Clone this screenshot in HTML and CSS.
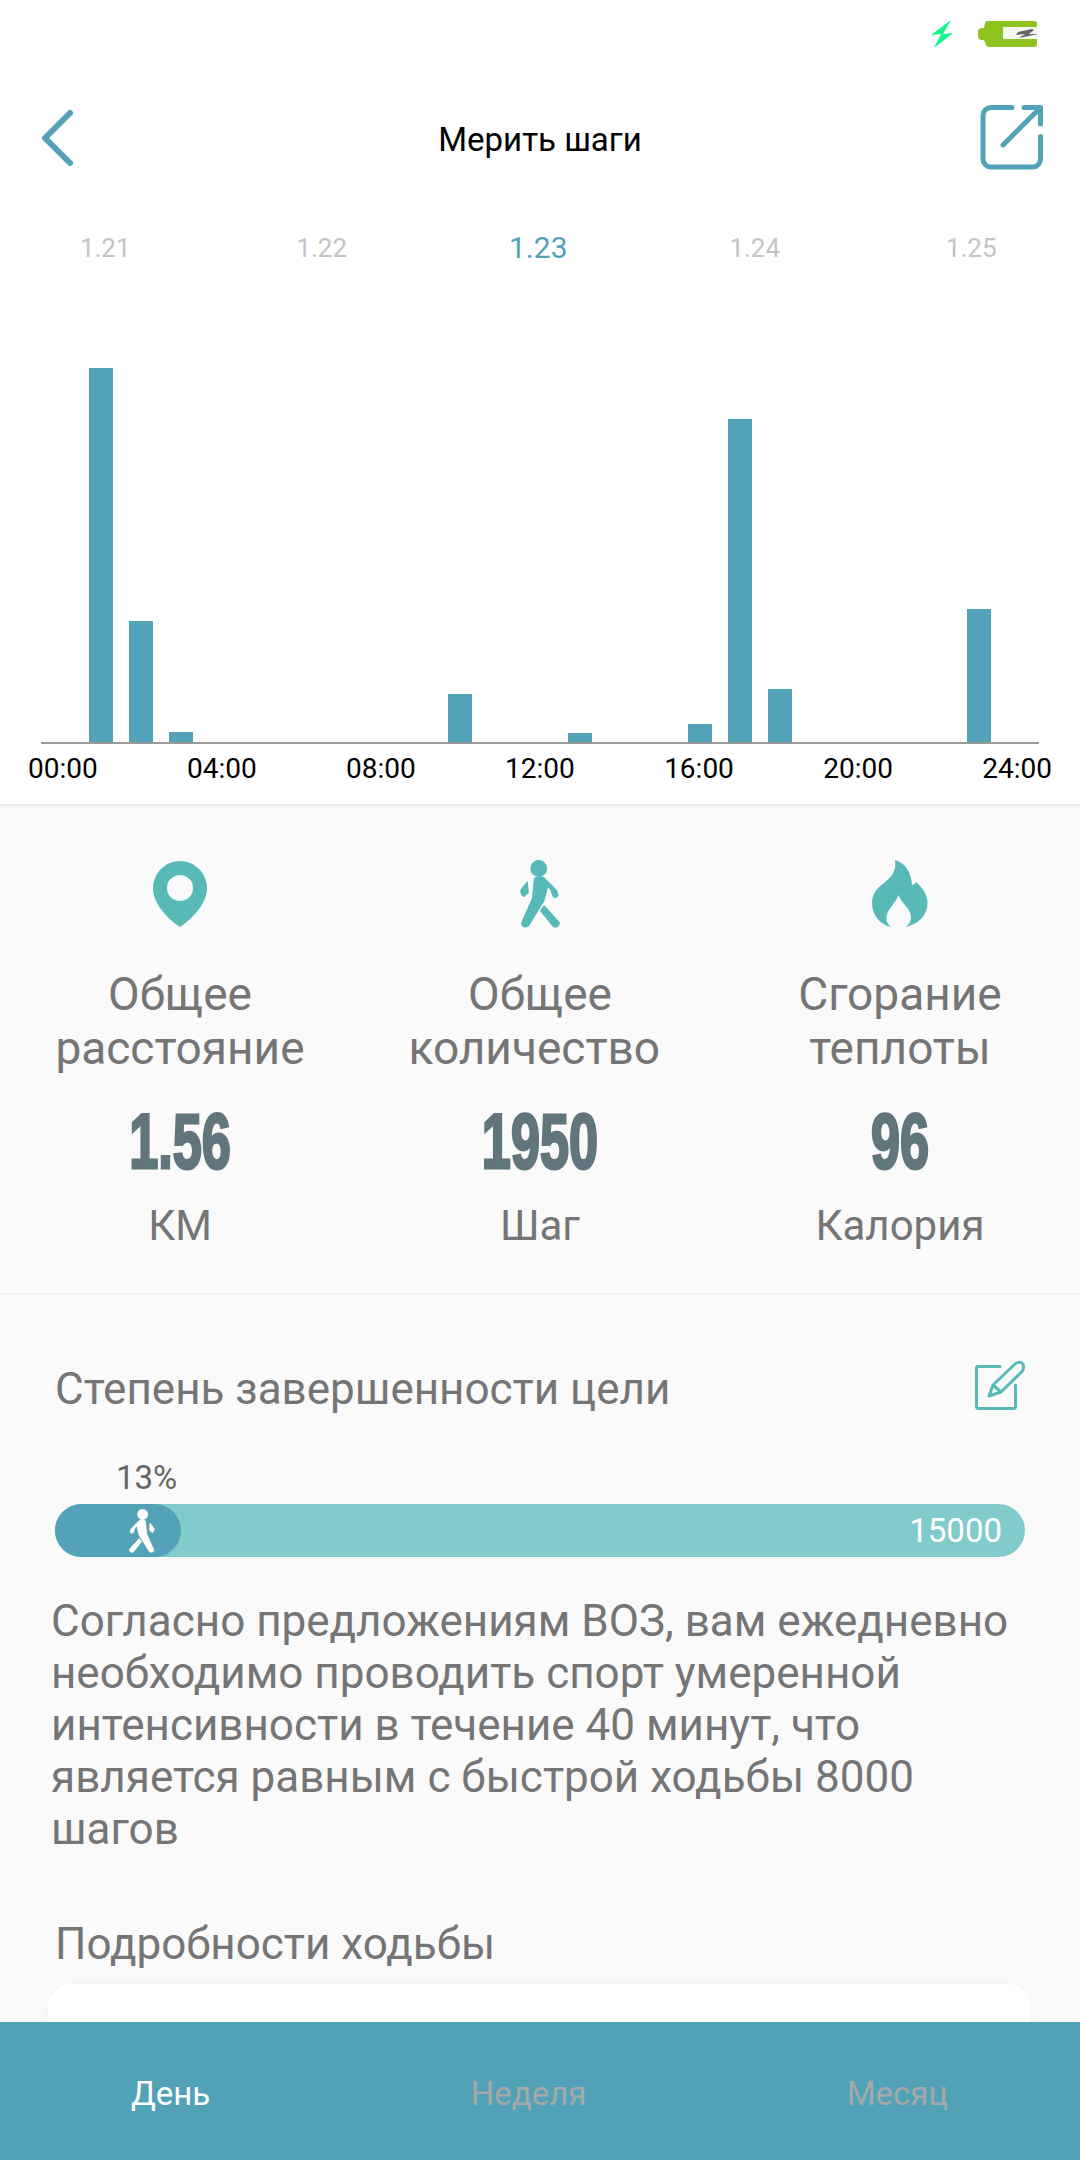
FILE: index.html
```html
<!DOCTYPE html>
<html lang="en">
  <head>
    <meta charset="UTF-8" />
    <title>Мерить шаги</title>
    <link rel="stylesheet" href="styles.css">
  </head>
  <body>
    <div class="app">
      <div class="chart-panel">
        <div class="status-bar">
          <svg viewBox="0 0 22 28" width="22" height="28"><path d="M20 0 0 15l10-1L3 28l19-15-10 1z" fill="#14f58a"/></svg>
          <svg viewBox="0 0 60 26" width="60" height="26">
            <path d="M9 0h47a3 3 0 0 1 3 3v3H25v12h34v5a3 3 0 0 1-3 3H11a3 3 0 0 1-3-2l-2-5H4a4 4 0 0 1-4-4V11a4 4 0 0 1 4-4h2l1-5a3 3 0 0 1 2-2z" fill="#8fc31f"/>
            <rect x="25" y="6" width="35" height="12" fill="#f5f5f1"/>
            <path d="M54 8 40 11l-2 3 9-1-6 4 19-4-9 0 5-4z" fill="#666"/>
          </svg>
        </div>
        <header class="top-bar">
          <svg viewBox="0 0 40 60" width="40" height="60"><path d="M33 5 8 30l25 25" fill="none" stroke="#53a2b7" stroke-width="6" stroke-linecap="round" stroke-linejoin="round"/></svg>
          <h1>Мерить шаги</h1>
          <svg class="share" viewBox="0 0 68 70" width="68" height="70" fill="none" stroke="#53a2b7" stroke-width="5" stroke-linecap="round" stroke-linejoin="round">
            <path d="M34 4.5H13a8 8 0 0 0-8 8V56a8 8 0 0 0 8 8h41.5a8 8 0 0 0 8-8V33.5"/>
            <path d="M46 4.5h16.5V21M62 5 25 42"/>
          </svg>
        </header>
        <div class="dates">
          <span>1.21</span>
          <span>1.22</span>
          <span class="current">1.23</span>
          <span>1.24</span>
          <span>1.25</span>
        </div>
        <!-- one slot per hour mark, 00 to 24 -->
        <div class="chart">
          <div class="slot"></div>
          <div class="slot"><i class="bar" style="height:374px"></i></div>
          <div class="slot"><i class="bar" style="height:121px"></i></div>
          <div class="slot"><i class="bar" style="height:10px"></i></div>
          <div class="slot"></div>
          <div class="slot"></div>
          <div class="slot"></div>
          <div class="slot"></div>
          <div class="slot"></div>
          <div class="slot"></div>
          <div class="slot"><i class="bar" style="height:48px"></i></div>
          <div class="slot"></div>
          <div class="slot"></div>
          <div class="slot"><i class="bar" style="height:9px"></i></div>
          <div class="slot"></div>
          <div class="slot"></div>
          <div class="slot"><i class="bar" style="height:18px"></i></div>
          <div class="slot"><i class="bar" style="height:323px"></i></div>
          <div class="slot"><i class="bar" style="height:53px"></i></div>
          <div class="slot"></div>
          <div class="slot"></div>
          <div class="slot"></div>
          <div class="slot"></div>
          <div class="slot"><i class="bar" style="height:133px"></i></div>
          <div class="slot"></div>
        </div>
        <div class="hours">
          <span>00:00</span>
          <span>04:00</span>
          <span>08:00</span>
          <span>12:00</span>
          <span>16:00</span>
          <span>20:00</span>
          <span>24:00</span>
        </div>
      </div>

      <section class="totals">
        <div class="total">
          <svg viewBox="0 0 56 68" width="56" height="68"><path fill-rule="evenodd" d="M28 1A27 27 0 0 0 1 28c0 16 15 31 27 39 12-8 27-23 27-39A27 27 0 0 0 28 1zm0 14a13 13 0 1 1 0 26 13 13 0 0 1 0-26z" fill="#57bab7"/></svg>
          <p class="label">Общее<br>расстояние</p>
          <p class="value">1.56</p>
          <p class="unit">КМ</p>
        </div>
        <div class="total">
          <svg viewBox="0 0 40 67" width="41" height="68" fill="#57bab7" stroke="#57bab7" stroke-linejoin="round">
            <circle cx="18.3" cy="8.3" r="7.8"/>
            <path d="M14 18C17 16 21 16 24 18L34 28C35.5 29 36 30 36.5 32L37 34C37.5 37 33 38 32 35L30 29 27 26 23.5 40 10 62C8 68 0 67 1.7 61L12 38Z"/>
            <path d="M23.5 45 20 50 32 65C35 68 40 64 38 61Z"/>
            <path d="M7 21.5 1 29C0 31 1 35 3.5 36L8 32Z"/>
          </svg>
          <p class="label">Общее<br>количество&nbsp;</p>
          <p class="value">1950</p>
          <p class="unit">Шаг</p>
        </div>
        <div class="total">
          <svg viewBox="0 0 56 68" width="56" height="68"><path d="M23 0C33 3 39 11 40 25C41 25 43 24 44 22C51 28 55.5 35 55.5 43C55.5 55 47 64 33.5 67C38 64 40 59 38.5 54C36.5 47 30 44 26.5 35C24 42 18 47 15 54C13.5 60 15 64 19.5 67C8 65 0 55 0 43C0 34 5 28 12 23C18 18 25 12 23 0Z" fill="#57bab7"/></svg>
          <p class="label">Сгорание<br>теплоты</p>
          <p class="value">96</p>
          <p class="unit">Калория</p>
        </div>
      </section>

      <section class="goal">
        <div class="goal-head">
          <h2>Степень завершенности цели</h2>
          <svg viewBox="0 0 50 50" width="50" height="50" fill="none" stroke="#57bab7" stroke-width="3" stroke-linecap="round" stroke-linejoin="round">
            <path d="M25 6.5H3a1.5 1.5 0 0 0-1.5 1.5v39a1.5 1.5 0 0 0 1.5 1.5h36a1.5 1.5 0 0 0 1.5-1.5V25"/>
            <path d="M14 36 18 25 40 4C44 1 48 2 48.5 6C49 9 47.5 11 46.5 12L26 32ZM18 25 26 32"/>
          </svg>
        </div>
        <div class="percent">13%</div>
        <div class="progress">
          <div class="progress-fill">
            <svg class="flip" viewBox="0 0 40 67" width="27" height="44" fill="#fff" stroke="#fff" stroke-linejoin="round">
              <circle cx="18.3" cy="8.3" r="7.8"/>
              <path d="M14 18C17 16 21 16 24 18L34 28C35.5 29 36 30 36.5 32L37 34C37.5 37 33 38 32 35L30 29 27 26 23.5 40 10 62C8 68 0 67 1.7 61L12 38Z"/>
              <path d="M23.5 45 20 50 32 65C35 68 40 64 38 61Z"/>
              <path d="M7 21.5 1 29C0 31 1 35 3.5 36L8 32Z"/>
            </svg>
          </div>
          <span class="goal-steps">15000</span>
        </div>
        <p class="advice">Согласно предложениям ВОЗ, вам ежедневно необходимо проводить спорт умеренной интенсивности в течение 40 минут, что является равным с быстрой ходьбы 8000 шагов</p>
        <h2 class="details-title">Подробности ходьбы</h2>
        <div class="details-card"></div>
      </section>

      <nav class="tabs">
        <span class="active">День</span>
        <span>Неделя</span>
        <span>Месяц</span>
      </nav>
    </div>
  </body>
</html>
```

FILE: styles.css
```css
body,
html {
  margin: 0;
  height: 100%;
  font-family: Roboto, "Liberation Sans", sans-serif;
}

p,
h1,
h2 {
  margin: 0;
  font-weight: normal;
}

.app {
  position: relative;
  height: 2160px;
  overflow: hidden;
  background-color: #fafafa;
}

.chart-panel {
  height: 804px;
  background-color: #fff;
  box-shadow: 0 1px 4px rgba(0, 0, 0, 0.1);
}

.status-bar {
  display: flex;
  justify-content: flex-end;
  align-items: center;
  gap: 25px;
  height: 68px;
  padding-right: 42px;
}

.top-bar {
  display: grid;
  grid-template-columns: 1fr auto 1fr;
  align-items: center;
  height: 70px;
  margin-top: 35px;
  padding: 0 34px 0 37px;
}

.top-bar h1 {
  margin: 2px 0 0 -3px;
  font-size: 33px;
  color: #000;
}

.top-bar .share {
  justify-self: end;
}

.dates {
  display: flex;
  margin-left: -3px;
  padding-top: 57px;
  color: #c4c4c4;
  font-size: 26px;
  line-height: 36px;
}

.dates span {
  flex: 0 0 216.5px;
  text-align: center;
}

.dates .current {
  color: #53a2b7;
  font-size: 30px;
}

.chart {
  display: grid;
  grid-template-columns: repeat(25, 1fr);
  align-items: end;
  height: 476px;
  margin: 0 41px;
  border-bottom: 2px solid #999;
}

.slot {
  display: flex;
  justify-content: center;
}

.bar {
  display: block;
  width: 24px;
  background-color: #53a2b7;
}

.hours {
  display: flex;
  justify-content: space-between;
  padding: 9px 28px 0 28px;
  font-size: 28px;
  line-height: 32px;
  color: #000;
}

.totals {
  display: flex;
  box-sizing: border-box;
  height: 490px;
  padding-top: 56px;
  border-bottom: 1px solid #ececec;
}

.total {
  flex: 1;
  text-align: center;
}

.total svg {
  display: block;
  margin: 0 auto;
}

.label {
  margin-top: 39px;
  font-size: 46px;
  line-height: 54px;
  color: #757575;
}

/* no condensed face installed, so the digits are squeezed and thickened */
.value {
  margin-top: 25px;
  font-family: "Liberation Sans", sans-serif;
  font-weight: bold;
  font-size: 78px;
  line-height: 82px;
  color: #61767c;
  -webkit-text-stroke: 3px #61767c;
  transform: scaleX(0.67);
}

.unit {
  margin-top: 19px;
  font-size: 42px;
  line-height: 50px;
  color: #757575;
}

.goal {
  padding: 0 55px;
}

.goal-head {
  display: flex;
  justify-content: space-between;
  align-items: center;
  height: 50px;
  margin-top: 66px;
}

.goal h2 {
  font-size: 44px;
  line-height: 52px;
  color: #757575;
}

.goal-head h2 {
  margin-top: 8px;
}

.percent {
  margin: 50px 0 0 61px;
  font-size: 33px;
  line-height: 36px;
  color: #666;
}

.progress {
  display: flex;
  align-items: center;
  justify-content: space-between;
  height: 53px;
  margin-top: 8px;
  border-radius: 27px;
  background-color: #81cccb;
  color: #fff;
}

.progress-fill {
  display: flex;
  align-items: center;
  justify-content: flex-end;
  box-sizing: border-box;
  width: 126px;
  height: 53px;
  padding-right: 26px;
  border-radius: 27px;
  background-color: #53a2b7;
}

.flip {
  transform: scaleX(-1);
}

.goal-steps {
  padding-right: 23px;
  font-size: 33px;
}

.advice {
  margin: 38px 0 0 -4px;
  font-size: 44px;
  line-height: 52px;
  color: #757575;
}

.goal h2.details-title {
  margin-top: 63px;
}

.details-card {
  height: 100px;
  margin: 14px -6px 0 -7px;
  border-radius: 24px;
  background-color: #fffffd;
  box-shadow: 0 0 6px rgba(0, 0, 0, 0.03);
}

.tabs {
  position: absolute;
  left: 0;
  right: 0;
  bottom: 0;
  display: flex;
  justify-content: space-between;
  align-items: center;
  box-sizing: border-box;
  height: 138px;
  padding: 4px 132px 0 131px;
  background-color: #51a2b6;
  font-size: 33px;
  color: #a3a8a9;
}

.tabs .active {
  color: #fff;
}
```
